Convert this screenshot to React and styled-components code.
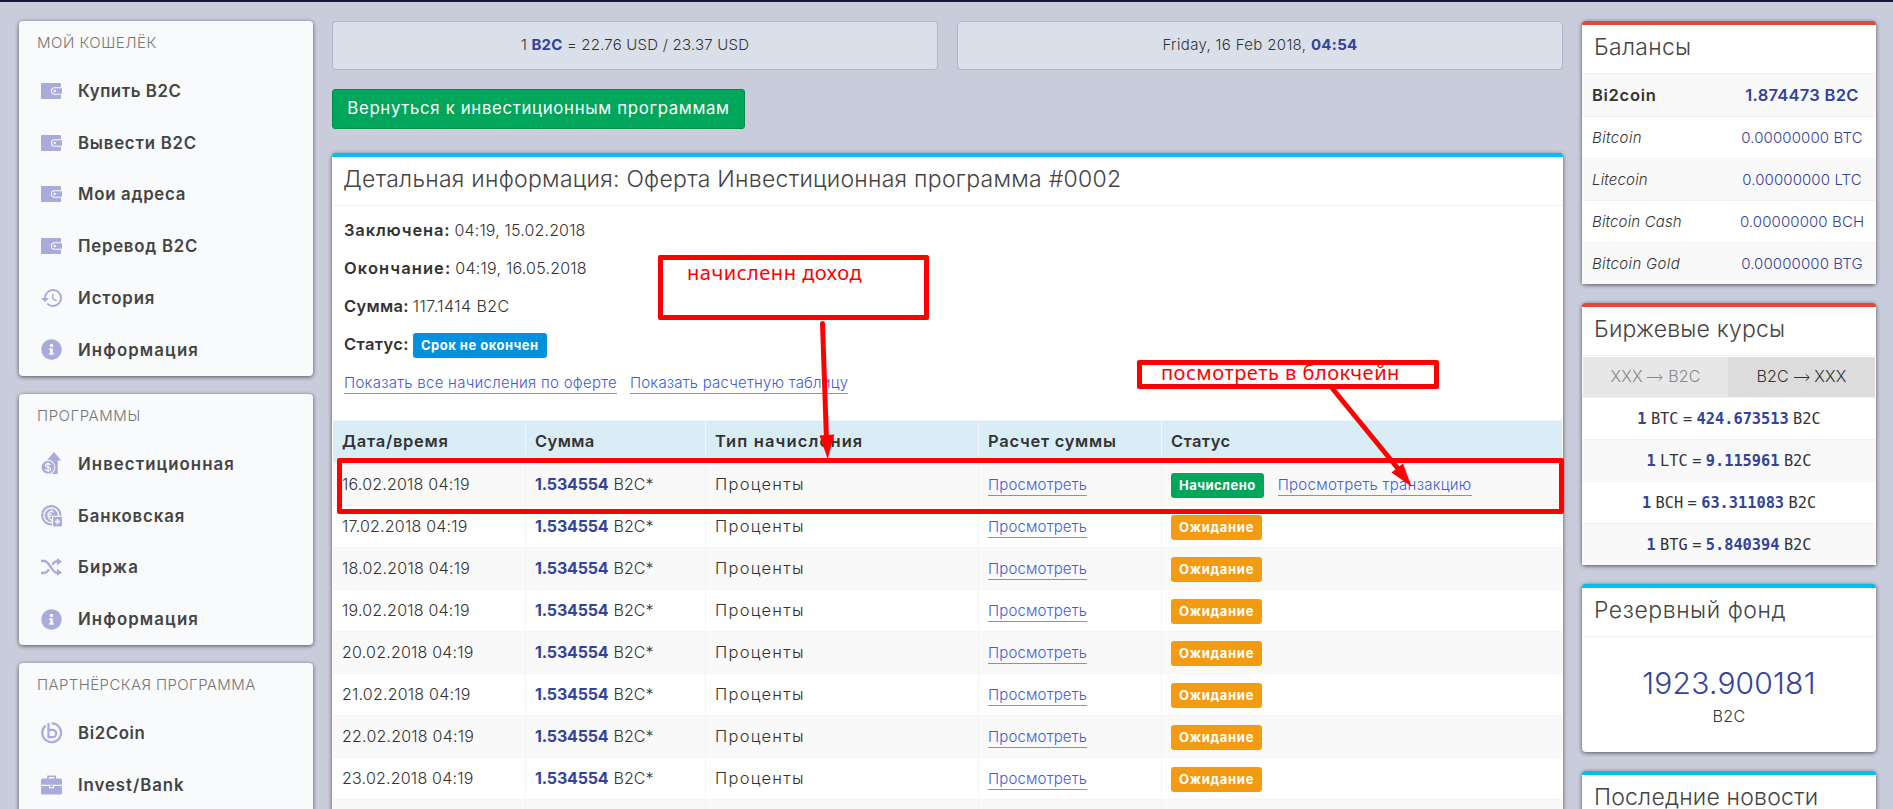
import React from 'react';
import styled, { createGlobalStyle } from 'styled-components';
import { MdHistory } from 'react-icons/md';
import { FaInfoCircle } from 'react-icons/fa';

const walletMenu = [
  { icon: 'wallet', label: 'Купить B2C', sp: 0.56 },
  { icon: 'wallet', label: 'Вывести B2C', sp: 0.78 },
  { icon: 'wallet', label: 'Мои адреса', sp: 0.72 },
  { icon: 'wallet', label: 'Перевод B2C', sp: 0.75 },
  { icon: 'history', label: 'История', sp: 0.9 },
  { icon: 'info', label: 'Информация', sp: 1.1 },
]

const programMenu = [
  { icon: 'invest', label: 'Инвестиционная', sp: 1.06 },
  { icon: 'bank', label: 'Банковская', sp: 0.88 },
  { icon: 'shuffle', label: 'Биржа', sp: 1.2 },
  { icon: 'info', label: 'Информация', sp: 1.1 },
]

const partnerMenu = [
  { icon: 'coin', label: 'Bi2Coin', sp: 0.62 },
  { icon: 'case', label: 'Invest/Bank', sp: 0.94 },
]

const balances = [
  { name: 'Bitcoin', value: '0.00000000 BTC', sp: 0.4 },
  { name: 'Litecoin', value: '0.00000000 LTC', sp: 0.17 },
  { name: 'Bitcoin Cash', value: '0.00000000 BCH', sp: 0.15 },
  { name: 'Bitcoin Gold', value: '0.00000000 BTG', sp: 0.33 },
]

const rates = [
  { coin: 'BTC', value: '424.673513' },
  { coin: 'LTC', value: '9.115961' },
  { coin: 'BCH', value: '63.311083' },
  { coin: 'BTG', value: '5.840394' },
]

const days = [16, 17, 18, 19, 20, 21, 22, 23]

function Icon({ name }) {
  if (name === 'history') return <MdHistory size={24} />
  if (name === 'info') return <FaInfoCircle size={21} />
  if (name === 'wallet') return (
    <svg width="21" height="16" viewBox="0 0 21 16">
      <rect width="20" height="16" rx="0.8" fill="currentColor" />
      <path d="M22 4.800H13.600a3.200 3.200 0 0 0 0 6.400H22z" fill="currentColor" stroke="#f9fafc" strokeWidth="1.100" />
      <circle cx="13.700" cy="8" r="1.200" fill="#f9fafc" />
    </svg>
  )
  if (name === 'invest') return (
    <svg width="21" height="23" viewBox="0 0 21 23">
      <path d="M13 0l7.300 8.600h-3.600V22H8V8.600H5.700z" fill="currentColor" />
      <circle cx="7" cy="15.200" r="7.400" fill="#f9fafc" />
      <circle cx="7" cy="15.200" r="6.400" fill="currentColor" />
      <path d="M9.600 12.900c-.4-.9-1.300-1.200-2.600-1.200-1.500 0-2.500.5-2.500 1.700 0 2.500 5.200 1 5.200 3.500 0 1.200-1.100 1.800-2.700 1.800-1.400 0-2.400-.5-2.700-1.400M7 10.400v9.600" fill="none" stroke="#f9fafc" strokeWidth="1.200" />
    </svg>
  )
  if (name === 'bank') return (
    <svg width="21" height="22" viewBox="0 0 21 22">
      <circle cx="10.300" cy="10.300" r="9.200" fill="none" stroke="currentColor" strokeWidth="2.200" />
      <circle cx="10.300" cy="10.300" r="6.600" fill="currentColor" />
      <path d="M12.400 7.300c-.6-.8-1.400-1-2.300-1-1.500 0-2.600 1.300-2.600 4s1 4.300 2.800 4.300c.9 0 1.500-.3 2-.9M6.200 9.200h4.600M6.200 11.400h4.200M10.400 4.600v1.700M10.400 14.600v1.600" fill="none" stroke="#f9fafc" strokeWidth="1.200" />
      <path d="M11 10.700h10V22H11z" fill="#f9fafc" />
      <path d="M12.100 11.800H21V21.400h-8.900z" fill="currentColor" />
      <path d="M16.500 14v5.200M14 16.600h5.100" stroke="#f9fafc" strokeWidth="1.700" />
    </svg>
  )
  if (name === 'shuffle') return (
    <svg width="21" height="18" viewBox="0 0 21 18">
      <path d="M0 3h3.200C8.800 3 10.500 15 16.600 15M0 15h3.200C5.500 15 6.800 13.300 7.900 11.300M11.300 6.600C12.500 4.600 14 3.100 16.600 3.100" fill="none" stroke="currentColor" strokeWidth="2.300" />
      <path d="M16 0l5 3.500-5 3.900zM16 10.700l5 3.900-5 3.400z" fill="currentColor" />
    </svg>
  )
  if (name === 'coin') return (
    <svg width="21" height="22" viewBox="0 0 21 22">
      <path d="M4.600 3.600a9.400 9.400 0 1 0 5.900-2.200" fill="none" stroke="currentColor" strokeWidth="2.200" />
      <path d="M7.500 1v14.200h4a3.700 3.700 0 0 0 0-7.400H7.600" fill="none" stroke="currentColor" strokeWidth="2.200" />
    </svg>
  )
  return (
    <svg width="21" height="20" viewBox="0 0 21 20">
      <path d="M7 4V1.200h7.200V4" fill="none" stroke="currentColor" strokeWidth="1.600" />
      <path d="M1.500 3.600h18A1.500 1.500 0 0 1 21 5.100V9.700H0V5.100a1.500 1.500 0 0 1 1.500-1.500zM0 10.900h8v2.300h5v-2.300h8v7.200a1.300 1.300 0 0 1-1.300 1.300H1.300A1.300 1.300 0 0 1 0 18.100z" fill="currentColor" />
      <path d="M9.200 10.200h2.600v2H9.200z" fill="currentColor" />
    </svg>
  )
}

function Arrow() {
  return <svg className="arrow" width="16" height="9" viewBox="0 0 16 9">
    <path d="M0 4.500h15M11.800 1.200l3.400 3.300-3.400 3.300" fill="none" stroke="currentColor" />
  </svg>
}

function Menu({ title, sp, items, height }) {
  return <MenuCard $h={height}>
    <MenuTitle $sp={sp}>{title}</MenuTitle>
    {items.map((item, i) => (
      <MenuItem key={i} $sp={item.sp}>
        <span className="icon"><Icon name={item.icon} /></span>
        <p>{item.label}</p>
      </MenuItem>
    ))}
  </MenuCard>
}

// Red marks drawn over the table
function Notes() {
  return <>
    <NoteBox $x={658} $y={255} $w={271} $h={65} />
    <NoteText $x={687} $y={258} $sp={0.52}>начисленн доход</NoteText>
    <NoteText $x={1161} $y={358} $sp={0.5}>посмотреть в блокчейн</NoteText>
    <NoteBox $x={1137} $y={360} $w={302} $h={29} />
    <NoteBox $x={337} $y={458} $w={1227} $h={56} />
    <Arrows width="640" height="180" viewBox="810 315 640 180">
      <path d="M822.500 323.500L826.500 440M1332 388L1400 471" stroke="#f00" strokeWidth="5" strokeLinecap="round" />
      <path d="M819.600 435.500L834.400 434.500L827.700 459zM1391.500 472.500L1403 463.500L1411.500 486.500z" fill="#f00" />
    </Arrows>
  </>
}

function App() {
  return <Page>
    <GlobalStyle />
    <Sidebar>
      <Menu title="МОЙ КОШЕЛЁК" sp={0.5} items={walletMenu} height={355} />
      <Menu title="ПРОГРАММЫ" sp={0.55} items={programMenu} height={251} />
      <Menu title="ПАРТНЁРСКАЯ ПРОГРАММА" sp={0.4} items={partnerMenu} height={355} />
    </Sidebar>

    <Main>
      <InfoRow>
        <InfoBox $sp={0.2}>1 <b>B2C</b> = 22.76 USD / 23.37 USD</InfoBox>
        <InfoBox $sp={0.33}>Friday, 16 Feb 2018, <b>04:54</b></InfoBox>
      </InfoRow>
      <BackButton>Вернуться к инвестиционным программам</BackButton>

      <Card $color="#00c0f0">
        <CardTitle $sp={0.27} $left={11}>Детальная информация: Оферта Инвестиционная программа #0002</CardTitle>
        <Details>
          <Line><Label $sp={0.86}>Заключена:</Label><Text $sp={0.15}>04:19, 15.02.2018</Text></Line>
          <Line><Label $sp={1.1}>Окончание:</Label><Text $sp={0.22}>04:19, 16.05.2018</Text></Line>
          <Line><Label $sp={0.3}>Сумма:</Label><Text $sp={0.45}>117.1414 B2C</Text></Line>
          <Line><Label $sp={0.36}>Статус:</Label><Badge $color="#0090e0" $sp={0.5}>Срок не окончен</Badge></Line>
          <Line>
            <Link $sp={0.28}>Показать все начисления по оферте</Link>
            <Link $sp={0.22}>Показать расчетную таблицу</Link>
          </Line>
        </Details>
        <Table>
          <HeadRow>
            <Cell $sp={0.72}>Дата/время</Cell>
            <Cell $sp={0.4}>Сумма</Cell>
            <Cell $sp={1.14}>Тип начисления</Cell>
            <Cell $sp={0.72}>Расчет суммы</Cell>
            <Cell $sp={0.4}>Статус</Cell>
          </HeadRow>
          {days.map((day) => (
            <Row key={day}>
              <Cell $sp={0.21}>{day}.02.2018 04:19</Cell>
              <Cell><Amount>1.534554</Amount>B2C*</Cell>
              <Cell $sp={1.25}><Kind>Проценты</Kind></Cell>
              <Cell><Link $sp={0.15}>Просмотреть</Link></Cell>
              <Cell>
                {day === 16
                  ? <><Badge $color="#00a65a" $sp={0.46}>Начислено</Badge><Link $sp={0.28}>Просмотреть транзакцию</Link></>
                  : <Badge $color="#f39c12" $sp={0.7}>Ожидание</Badge>}
              </Cell>
            </Row>
          ))}
          <Row><Cell /><Cell /><Cell /><Cell /><Cell /></Row>
        </Table>
      </Card>
    </Main>

    <Aside>
      <Card $color="#dd4b39">
        <CardTitle $sp={0.3}>Балансы</CardTitle>
        <BalanceRow $main>
          <span>Bi2coin</span>
          <p>1.874473 B2C</p>
        </BalanceRow>
        {balances.map((item) => (
          <BalanceRow key={item.name} $sp={item.sp}>
            <span>{item.name}</span>
            <p>{item.value}</p>
          </BalanceRow>
        ))}
      </Card>
      <Card $color="#dd4b39">
        <CardTitle $sp={0.2}>Биржевые курсы</CardTitle>
        <Tabs>
          <Tab>XXX <Arrow /> B2C</Tab>
          <Tab $active>B2C <Arrow /> XXX</Tab>
        </Tabs>
        {rates.map((item) => (
          <RateRow key={item.coin}>
            <b>1</b> {item.coin} = <b>{item.value}</b> B2C
          </RateRow>
        ))}
      </Card>
      <Card $color="#00c0f0">
        <CardTitle $sp={0.55}>Резервный фонд</CardTitle>
        <Fund>
          <h2>1923.900181</h2>
          <p>B2C</p>
        </Fund>
      </Card>
      <Card $color="#00c0f0">
        <CardTitle $sp={0.2}>Последние новости</CardTitle>
        <Fund />
      </Card>
    </Aside>
    <Notes />
  </Page>
}

export default App

const GlobalStyle = createGlobalStyle`
* {
  box-sizing: border-box;
  margin: 0;
  padding: 0;
}
body {
  background-color: #c9ccdb;
  font-family: Inter, "Open Sans", sans-serif;
  font-size: 16px;
  font-weight: 300;
  color: #333;
  overflow: hidden;
}
`

const Page = styled.div`
position: relative;
display: flex;
align-items: flex-start;
gap: 19px;
height: 809px;
padding: 19px 17px 0 19px;
border-top: 2px solid #14163a;
overflow: hidden;
`

const Sidebar = styled.div`
display: flex;
flex-direction: column;
flex: 0 0 294px;
gap: 18px;
`

const Main = styled.div`
flex: 1;
min-width: 0;
`

const Aside = styled.div`
display: flex;
flex-direction: column;
flex: 0 0 294px;
gap: 19px;
`

const MenuCard = styled.div`
height: ${p => p.$h}px;
background-color: #f9fafc;
border-radius: 4px;
box-shadow: 0 1px 4px rgba(0, 0, 0, .6);
`

const MenuTitle = styled.h3`
height: 44px;
padding-left: 18px;
line-height: 43px;
font-size: 15px;
font-weight: 300;
letter-spacing: ${p => p.$sp}px;
color: #777;
`

const MenuItem = styled.div`
display: flex;
align-items: center;
height: 51.8px;
padding-left: 18px;
.icon{
  display: flex;
  justify-content: center;
  width: 29px;
  color: #a9abdb;
}
>p{
  padding: 0 0 0 12px;
  font-size: 16.8px;
  font-weight: 600;
  letter-spacing: ${p => p.$sp}px;
  color: #444;
}
`

const InfoRow = styled.div`
display: flex;
gap: 19px;
`

const InfoBox = styled.div`
flex: 1;
height: 49px;
line-height: 46px;
text-align: center;
font-size: 15px;
letter-spacing: ${p => p.$sp}px;
background-color: #dae0ea;
border: 1px solid #b1b5c5;
border-radius: 4px;
b{
  font-weight: 700;
  color: #32439b;
}
`

const BackButton = styled.button`
display: block;
width: 413px;
height: 40px;
margin: 19px 0 24px;
padding-bottom: 2px;
font-family: inherit;
font-size: 16.8px;
font-weight: 400;
letter-spacing: .66px;
white-space: nowrap;
color: #fff;
background-color: #00a65a;
border: 1px solid #008d4c;
border-radius: 3px;
`

const Card = styled.div`
background-color: #fff;
border-top: 4px solid ${p => p.$color};
border-radius: 4px;
box-shadow: 0 1px 4px rgba(0, 0, 0, .6);
`

const CardTitle = styled.h2`
height: 48px;
padding-left: ${p => p.$left || 12}px;
line-height: 44px;
font-size: 23px;
font-weight: 300;
letter-spacing: ${p => p.$sp}px;
white-space: nowrap;
color: #444;
`

const Details = styled.div`
padding: 5px 12px 19px;
border-top: 1px solid #f2f2f2;
`

const Line = styled.div`
display: flex;
align-items: center;
height: 38px;
gap: 4px;
a + a{
  margin-left: 9px;
}
`

const Label = styled.b`
font-size: 16.5px;
font-weight: 600;
letter-spacing: ${p => p.$sp}px;
`

const Text = styled.span`
letter-spacing: ${p => p.$sp}px;
`

const Badge = styled.span`
height: 25px;
padding: 0 8px;
margin-top: 3px;
line-height: 24px;
font-size: 13px;
font-weight: 700;
letter-spacing: ${p => p.$sp}px;
color: #fff;
background-color: ${p => p.$color};
border-radius: 3px;
`

const Link = styled.a`
height: 20px;
margin-top: 4px;
line-height: 18px;
font-size: 15px;
letter-spacing: ${p => p.$sp}px;
white-space: nowrap;
color: #3f5bd9;
border-bottom: 1px solid #7b8fe6;
${Badge} + &{
  margin-left: 14px;
}
`

const Table = styled.div`
margin: 0 1px;
border-top: 1px solid #f4f4f4;
`

const Row = styled.div`
display: grid;
grid-template-columns: 193px 180px 273px 183px 1fr;
height: 42px;
border-bottom: 1px solid #f4f4f4;
&:nth-child(even){
  background-color: #f9f9f9;
}
`

const HeadRow = styled(Row)`
height: 43px;
font-size: 16.5px;
font-weight: 600;
background-color: #d9edf7;
border-bottom: 2px solid #f4f4f4;
`

const Cell = styled.div`
display: flex;
align-items: center;
padding: 0 0 1px 9px;
letter-spacing: ${p => p.$sp || 0}px;
white-space: nowrap;
&:not(:last-child){
  border-right: 1px solid #f4f4f4;
}
`

const Kind = styled.span`
font-size: 16.5px;
`

const Amount = styled.b`
margin-right: 5px;
font-weight: 700;
letter-spacing: -.16px;
color: #32439b;
`

const BalanceRow = styled.div`
display: grid;
grid-template-columns: 144px 1fr;
align-items: center;
height: ${p => p.$main ? 43 : 42}px;
padding: 0 8px 0 10px;
font-size: ${p => p.$main ? 16.5 : 15}px;
font-weight: ${p => p.$main ? 600 : 300};
border-top: 1px solid #f2f2f2;
&:nth-child(even){
  background-color: #f9f9f9;
}
>span{
  font-style: ${p => p.$main ? 'normal' : 'italic'};
  letter-spacing: ${p => p.$main ? 0.7 : p.$sp}px;
}
>p{
  text-align: center;
  letter-spacing: ${p => p.$main ? 0.28 : 0.1}px;
  color: #32439b;
}
`

const Tabs = styled.div`
display: grid;
grid-template-columns: 145px 1fr;
height: 42px;
padding: 1px 1px 0;
border-top: 1px solid #f2f2f2;
`

const Tab = styled.div`
line-height: 38px;
text-align: center;
letter-spacing: .2px;
color: ${p => p.$active ? '#333' : '#888'};
background-color: ${p => p.$active ? '#dcdcdc' : '#e7e7e7'};
.arrow{
  vertical-align: 0;
}
`

const RateRow = styled.div`
height: 42px;
line-height: 42px;
text-align: center;
font-family: "DejaVu Sans Mono", "Liberation Mono", monospace;
font-size: 15.3px;
word-spacing: -4.8px;
border-top: 1px solid #f2f2f2;
&:nth-child(even){
  background-color: #f9f9f9;
}
b{
  font-weight: 700;
  color: #32439b;
}
`

const Fund = styled.div`
height: 116px;
padding-top: 27px;
text-align: center;
border-top: 1px solid #f2f2f2;
>h2{
  font-size: 30px;
  line-height: 38px;
  font-weight: 300;
  letter-spacing: .2px;
  color: #32439b;
}
>p{
  line-height: 28px;
  letter-spacing: .38px;
}
`

const NoteBox = styled.div`
position: absolute;
left: ${p => p.$x}px;
top: ${p => p.$y - 2}px;
width: ${p => p.$w}px;
height: ${p => p.$h}px;
border: 5px solid #f00;
border-radius: 2px;
`

const NoteText = styled.p`
position: absolute;
left: ${p => p.$x}px;
top: ${p => p.$y - 2}px;
font-family: "Noto Sans", "Open Sans", sans-serif;
font-size: 20px;
line-height: 30px;
font-weight: 400;
letter-spacing: ${p => p.$sp}px;
white-space: nowrap;
color: #f00;
`

const Arrows = styled.svg`
position: absolute;
left: 810px;
top: 313px;
`
